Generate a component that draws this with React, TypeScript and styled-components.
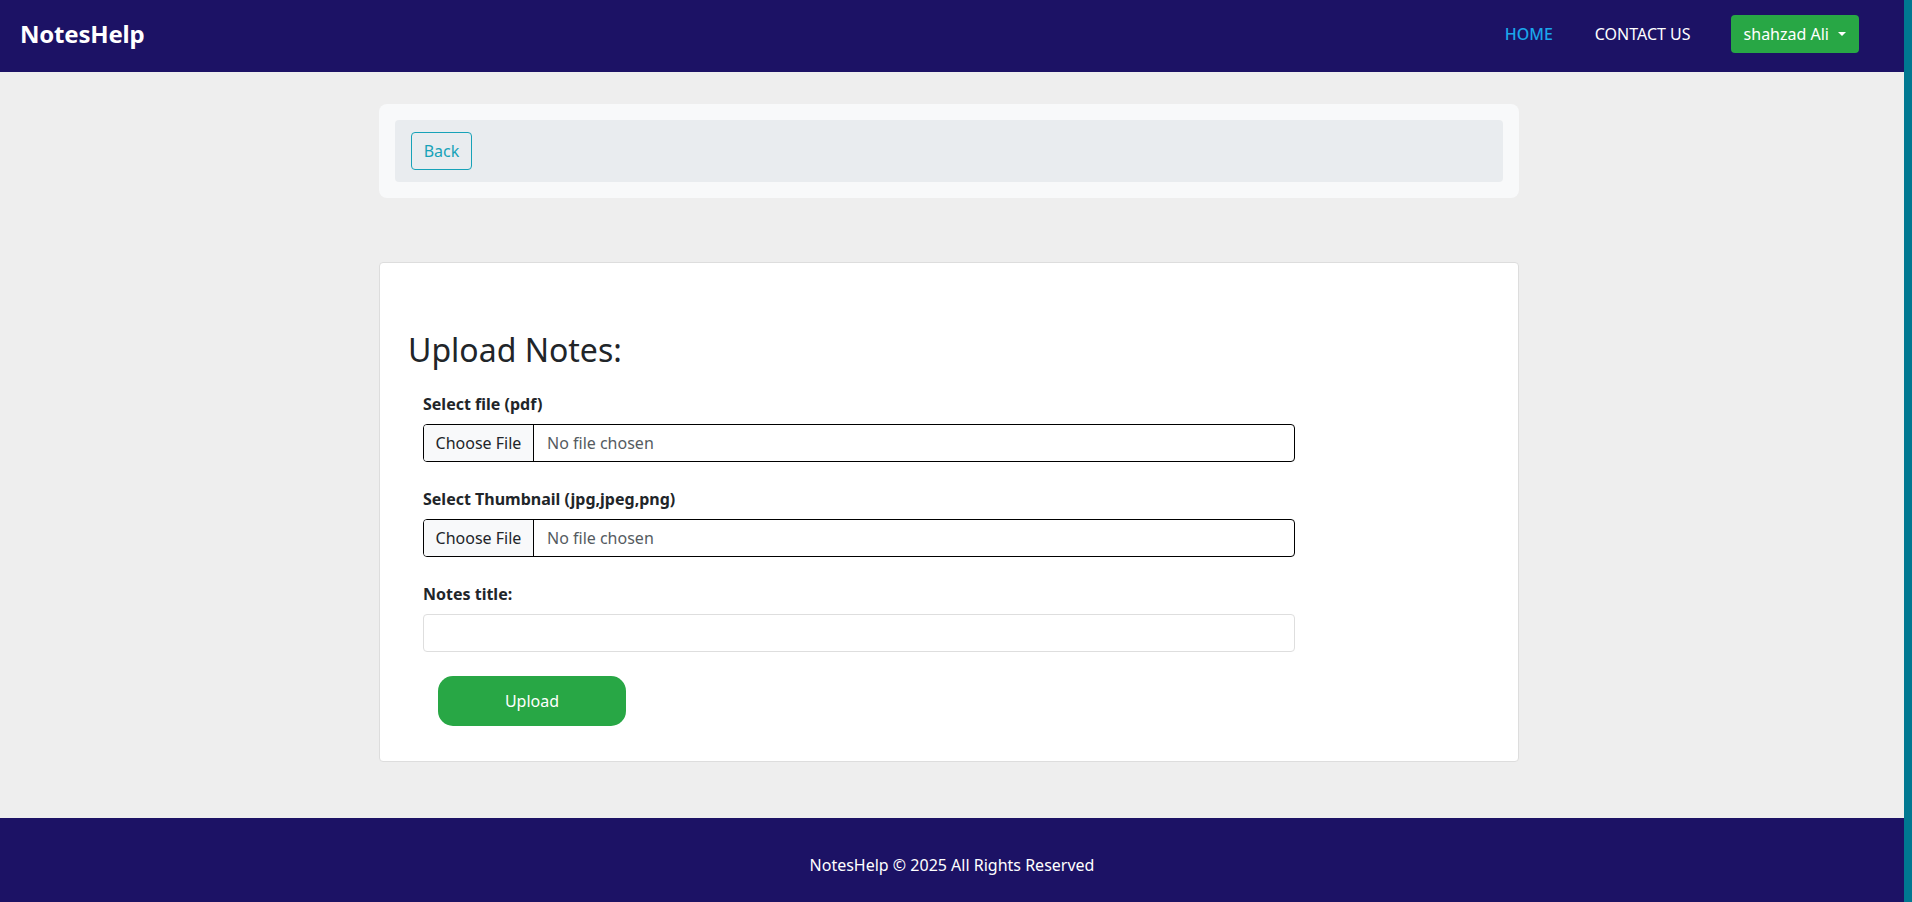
import React from "react";
import styled, { createGlobalStyle } from "styled-components";

const GlobalStyle = createGlobalStyle`
  * { box-sizing: border-box; }
  html, body { margin: 0; padding: 0; }
  body {
    font-family: "Noto Sans", "Open Sans", "Liberation Sans", sans-serif;
    font-size: 16px;
    line-height: 1.5;
    color: #212529;
    background: #eeeeee;
  }
`;

const Shell = styled.div`
  display: grid;
  grid-template-columns: 1fr 8px;
  min-height: 100vh;
`;

const ScrollStrip = styled.div`
  background: #007891;
  margin-bottom: 2px;
`;

const Page = styled.div`
  display: flex;
  flex-direction: column;
  min-width: 0;
`;

const NavBar = styled.nav`
  height: 72px;
  background: #1c1265;
  display: flex;
  align-items: center;
  justify-content: space-between;
  padding: 0 45px 5px 20px;
`;

const Brand = styled.a`
  color: #ffffff;
  font-weight: 700;
  font-size: 24px;
  text-decoration: none;
  letter-spacing: -0.2px;
`;

const NavRight = styled.div`
  display: flex;
  align-items: center;
`;

const NavLinks = styled.ul`
  list-style: none;
  margin: 0 40px 0 0;
  padding: 0;
  display: flex;
  gap: 42px;
`;

const NavLink = styled.a<{ $active?: boolean }>`
  color: ${(p) => (p.$active ? "#1aa7ec" : "#ffffff")};
  font-size: 16px;
  text-decoration: none;
  text-transform: uppercase;
  font-weight: ${(p) => (p.$active ? 500 : 400)};
`;

const UserButton = styled.button`
  height: 38px;
  background: #28a745;
  color: #ffffff;
  border: none;
  border-radius: 4px;
  padding: 0 13px;
  font-family: inherit;
  font-size: 16px;
  display: flex;
  align-items: center;
  gap: 9px;
  cursor: pointer;
`;

const Caret = styled.span`
  width: 0;
  height: 0;
  border-left: 4px solid transparent;
  border-right: 4px solid transparent;
  border-top: 4px solid #ffffff;
  margin-top: 1px;
`;

const Main = styled.main`
  flex: 1;
  display: flex;
  flex-direction: column;
  align-items: center;
  padding: 32px 6px 56px 0;
`;

const Column = styled.div`
  width: 1140px;
  display: flex;
  flex-direction: column;
  gap: 64px;
`;

const CrumbCard = styled.div`
  background: #f8f9fa;
  border-radius: 8px;
  padding: 16px;
`;

const Crumb = styled.div`
  background: #e9ecef;
  border-radius: 4px;
  padding: 12px 16px;
  display: flex;
`;

const BackButton = styled.button`
  height: 38px;
  width: 61px;
  padding: 0;
  background: transparent;
  border: 1px solid #17a2b8;
  border-radius: 4px;
  color: #17a2b8;
  font-family: inherit;
  font-size: 16px;
  cursor: pointer;
`;

const FormCard = styled.section`
  background: #ffffff;
  border: 1px solid #dddddd;
  border-radius: 4px;
  padding: 68px 26px 35px 26px;
`;

const Heading = styled.h2`
  margin: 0 0 23px 2px;
  font-size: 32px;
  font-weight: 400;
  line-height: 1.2;
`;

const Form = styled.form`
  padding: 0 0 0 17px;
  width: 889px;
  display: flex;
  flex-direction: column;
`;

const Group = styled.div`
  display: flex;
  flex-direction: column;
  margin-bottom: 25px;
`;

const LastGroup = styled(Group)`
  margin-bottom: 24px;
`;

const Label = styled.label`
  font-weight: 700;
  font-size: 16px;
  line-height: 24px;
  margin-bottom: 8px;
`;

const FilePicker = styled.label`
  height: 38px;
  border: 1px solid #000000;
  border-radius: 4px;
  display: flex;
  align-items: stretch;
  overflow: hidden;
  cursor: pointer;
  background: #ffffff;

  input {
    display: none;
  }
`;

const FileButton = styled.span`
  width: 110px;
  background: #f8f9fa;
  border-right: 1px solid #000000;
  display: flex;
  align-items: center;
  justify-content: center;
  color: #212529;
  font-size: 16px;
`;

const FileName = styled.span`
  display: flex;
  align-items: center;
  padding-left: 13px;
  color: #555b61;
  font-size: 16px;
`;

const TextInput = styled.input`
  height: 38px;
  border: 1px solid #dedede;
  border-radius: 4px;
  padding: 6px 12px;
  font-family: inherit;
  font-size: 16px;
  outline: none;
`;

const UploadButton = styled.button`
  align-self: flex-start;
  margin-left: 15px;
  width: 188px;
  height: 50px;
  border: none;
  border-radius: 15px;
  background: #28a745;
  color: #ffffff;
  font-family: inherit;
  font-size: 16px;
  cursor: pointer;
`;

const Footer = styled.footer`
  background: #1c1265;
  color: #ffffff;
  text-align: center;
  padding: 35px 0 36px 0;
  font-size: 16px;
  line-height: 24px;
`;

function FileField({ label, accept }: { label: string; accept: string }) {
  return (
    <Group>
      <Label>{label}</Label>
      <FilePicker>
        <input type="file" accept={accept} />
        <FileButton>Choose File</FileButton>
        <FileName>No file chosen</FileName>
      </FilePicker>
    </Group>
  );
}

export default function App() {
  return (
    <>
      <GlobalStyle />
      <Shell>
        <Page>
          <NavBar>
            <Brand href="#">NotesHelp</Brand>
            <NavRight>
              <NavLinks>
                <li>
                  <NavLink href="#" $active>
                    Home
                  </NavLink>
                </li>
                <li>
                  <NavLink href="#">Contact Us</NavLink>
                </li>
              </NavLinks>
              <UserButton type="button">
                shahzad Ali
                <Caret />
              </UserButton>
            </NavRight>
          </NavBar>
          <Main>
            <Column>
              <CrumbCard>
                <Crumb>
                  <BackButton type="button">Back</BackButton>
                </Crumb>
              </CrumbCard>
              <FormCard>
                <Heading>Upload Notes:</Heading>
                <Form onSubmit={(e) => e.preventDefault()}>
                  <FileField label="Select file (pdf)" accept=".pdf" />
                  <FileField
                    label="Select Thumbnail (jpg,jpeg,png)"
                    accept=".jpg,.jpeg,.png"
                  />
                  <LastGroup>
                    <Label>Notes title:</Label>
                    <TextInput type="text" />
                  </LastGroup>
                  <UploadButton type="submit">Upload</UploadButton>
                </Form>
              </FormCard>
            </Column>
          </Main>
          <Footer>NotesHelp © 2025 All Rights Reserved</Footer>
        </Page>
        <ScrollStrip />
      </Shell>
    </>
  );
}
